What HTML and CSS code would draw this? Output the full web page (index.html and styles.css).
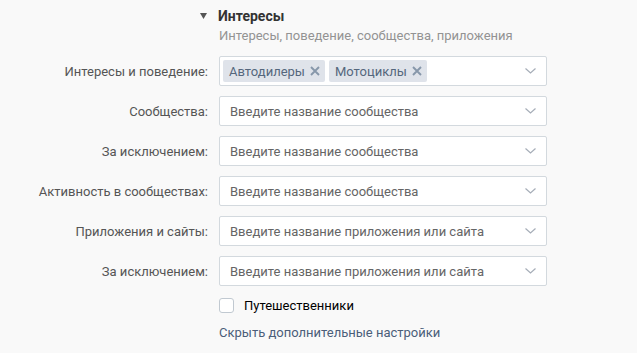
FILE: index.html
```html
<!DOCTYPE html>
<html lang="ru">
<head>
  <meta charset="UTF-8" />
  <title>Интересы</title>
  <link rel="stylesheet" href="styles.css">
</head>
<body>
  <div class="section">
    <div class="section-head">
      <svg class="arrow" width="7" height="6" viewBox="0 0 7 6"><path d="M0 0 H7 L3.5 6 Z" fill="#555"/></svg>
      <span class="section-title">Интересы</span>
    </div>
    <div class="section-sub">Интересы, поведение, сообщества, приложения</div>

    <div class="row">
      <label class="row-label">Интересы и поведение:</label>
      <div class="select">
        <span class="tag">Автодилеры <svg class="tag-x" width="10" height="10" viewBox="0 0 10 10"><path d="M1 1 L9 9 M9 1 L1 9" stroke="#8797aa" stroke-width="1.9"/></svg></span>
        <span class="tag">Мотоциклы <svg class="tag-x" width="10" height="10" viewBox="0 0 10 10"><path d="M1 1 L9 9 M9 1 L1 9" stroke="#8797aa" stroke-width="1.9"/></svg></span>
        <svg class="chevron" width="11" height="6" viewBox="0 0 11 6"><path d="M0.5 0.5 L5.5 5 L10.5 0.5" fill="none" stroke="#a6adb8" stroke-width="1.2"/></svg>
      </div>
    </div>
    <div class="row">
      <label class="row-label">Сообщества:</label>
      <div class="select"><span class="placeholder">Введите название сообщества</span>
        <svg class="chevron" width="11" height="6" viewBox="0 0 11 6"><path d="M0.5 0.5 L5.5 5 L10.5 0.5" fill="none" stroke="#a6adb8" stroke-width="1.2"/></svg></div>
    </div>
    <div class="row">
      <label class="row-label">За исключением:</label>
      <div class="select"><span class="placeholder">Введите название сообщества</span>
        <svg class="chevron" width="11" height="6" viewBox="0 0 11 6"><path d="M0.5 0.5 L5.5 5 L10.5 0.5" fill="none" stroke="#a6adb8" stroke-width="1.2"/></svg></div>
    </div>
    <div class="row">
      <label class="row-label">Активность в сообществах:</label>
      <div class="select"><span class="placeholder">Введите название сообщества</span>
        <svg class="chevron" width="11" height="6" viewBox="0 0 11 6"><path d="M0.5 0.5 L5.5 5 L10.5 0.5" fill="none" stroke="#a6adb8" stroke-width="1.2"/></svg></div>
    </div>
    <div class="row">
      <label class="row-label">Приложения и сайты:</label>
      <div class="select"><span class="placeholder">Введите название приложения или сайта</span>
        <svg class="chevron" width="11" height="6" viewBox="0 0 11 6"><path d="M0.5 0.5 L5.5 5 L10.5 0.5" fill="none" stroke="#a6adb8" stroke-width="1.2"/></svg></div>
    </div>
    <div class="row">
      <label class="row-label">За исключением:</label>
      <div class="select"><span class="placeholder">Введите название приложения или сайта</span>
        <svg class="chevron" width="11" height="6" viewBox="0 0 11 6"><path d="M0.5 0.5 L5.5 5 L10.5 0.5" fill="none" stroke="#a6adb8" stroke-width="1.2"/></svg></div>
    </div>

    <div class="check-row">
      <span class="checkbox"></span>
      <span class="check-label">Путешественники</span>
    </div>
    <div class="more-link">Скрыть дополнительные настройки</div>
  </div>
</body>
</html>
```

FILE: styles.css
```css
body {
  margin: 0;
  background-color: #f9f9f9;
  font-family: Roboto, "Open Sans", sans-serif;
  font-size: 13px;
  color: #000;
}
.section {
  padding-top: 7px;
}
.section-head {
  display: flex;
  align-items: center;
  padding-left: 200px;
  height: 18px;
}
.arrow {
  margin-right: 11px;
}
.section-title {
  font-size: 14px;
  font-weight: 700;
  color: #333;
}
.section-sub {
  padding-left: 219px;
  color: #939393;
  height: 18px;
  line-height: 18px;
  margin-top: 2px;
  margin-bottom: 11px;
}
.row {
  display: flex;
  align-items: center;
  margin-bottom: 10px;
}
.row-label {
  width: 219px;
  text-align: right;
  padding-right: 11px;
  box-sizing: border-box;
  color: #555;
}
.select {
  width: 328px;
  height: 30px;
  box-sizing: border-box;
  background: #fff;
  border: 1px solid #d3d9de;
  border-radius: 2px;
  display: flex;
  align-items: center;
  padding-left: 3px;
  gap: 4px;
}
.placeholder {
  color: #656565;
  padding-left: 7px;
}
.tag {
  display: flex;
  align-items: center;
  background: #dfe3ea;
  color: #55677d;
  height: 22px;
  padding: 0 5px 0 6px;
  border-radius: 2px;
}
.tag-x {
  margin-left: 5px;
}
.chevron {
  margin-left: auto;
  margin-right: 10px;
}
.check-row {
  display: flex;
  align-items: center;
  padding-left: 219px;
  margin-top: 12px;
}
.checkbox {
  width: 13px;
  height: 13px;
  border: 1px solid #c1c9d1;
  border-radius: 3px;
  background: #fff;
}
.check-label {
  margin-left: 10px;
}
.more-link {
  padding-left: 219px;
  margin-top: 12px;
  color: #4b5e79;
}
```
